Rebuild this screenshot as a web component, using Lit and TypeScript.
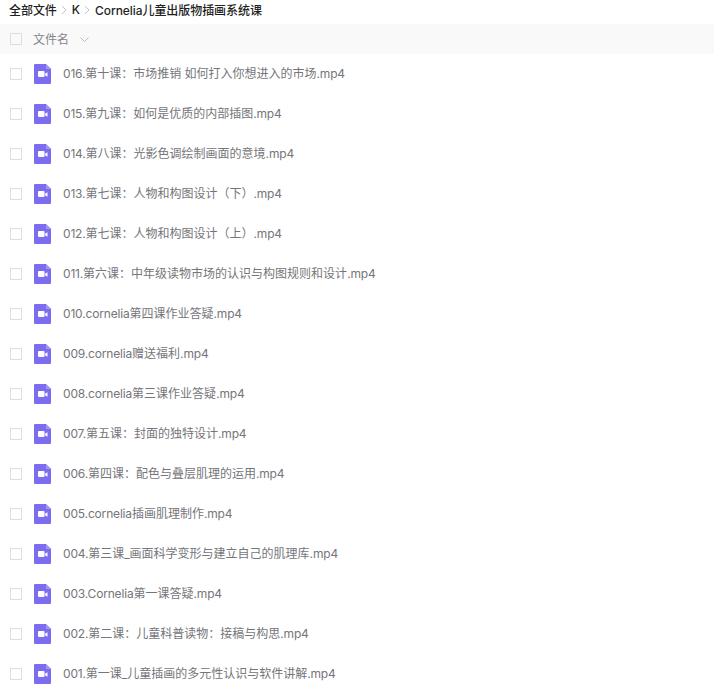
import { LitElement, html, css } from "lit";
import { customElement } from "lit/decorators.js";

const FILES = [
  "016.第十课：市场推销 如何打入你想进入的市场.mp4",
  "015.第九课：如何是优质的内部插图.mp4",
  "014.第八课：光影色调绘制画面的意境.mp4",
  "013.第七课：人物和构图设计（下）.mp4",
  "012.第七课：人物和构图设计（上）.mp4",
  "011.第六课：中年级读物市场的认识与构图规则和设计.mp4",
  "010.cornelia第四课作业答疑.mp4",
  "009.cornelia赠送福利.mp4",
  "008.cornelia第三课作业答疑.mp4",
  "007.第五课：封面的独特设计.mp4",
  "006.第四课：配色与叠层肌理的运用.mp4",
  "005.cornelia插画肌理制作.mp4",
  "004.第三课_画面科学变形与建立自己的肌理库.mp4",
  "003.Cornelia第一课答疑.mp4",
  "002.第二课：儿童科普读物：接稿与构思.mp4",
  "001.第一课_儿童插画的多元性认识与软件讲解.mp4",
];

const runs = (s: string) =>
  s.split(/([\x00-\x7f]+)/).filter(Boolean).map((r) =>
    /^[\x00-\x7f]/.test(r) ? html`<span class="latin">${r}</span>` : r
  );

@customElement("app-root")
export class AppRoot extends LitElement {
  static styles = css`
    :host {
      display: block;
      width: 714px;
      height: 696px;
      overflow: hidden;
      background: #fff;
      font-family: Inter, "Noto Sans CJK SC", sans-serif;
    }
    .crumbs {
      height: 19px;
      padding: 0 0 5px 9px;
      display: flex;
      align-items: center;
      gap: 4px;
      font-size: 12px;
      font-weight: 500;
      color: #1f1f24;
      letter-spacing: -0.06px;
    }
    .sep { width: 6px; height: 10px; margin: 0 0.5px; flex: none; }
    .head {
      height: 30px;
      display: flex;
      align-items: center;
      background: #f9f9f9;
      color: #85858a;
      font-size: 12px;
    }
    .box {
      width: 10px;
      height: 10px;
      border: 1px solid #dedede;
      background: #fff;
      margin-left: 10px;
      flex: none;
    }
    .head .box { background: #f9f9f9; }
    .head .label { margin-left: 11px; padding-bottom: 2px; }
    .chev { width: 9px; height: 5px; margin-left: 11px; }
    .row {
      height: 40px;
      display: flex;
      align-items: center;
      color: #75757a;
      font-size: 12px;
      white-space: pre;
    }
    .latin { letter-spacing: -0.17px; }
    .icon { width: 17px; height: 20px; margin-left: 12px; margin-right: 12px; flex: none; }
    .name { padding-bottom: 3px; }
  `;

  render() {
    return html`
      <div class="crumbs">
        <span>全部文件</span>
        <svg class="sep" viewBox="0 0 6 10"><path d="M1 1l4 4-4 4" fill="none" stroke="#c4c4c7" stroke-width="1"/></svg>
        <span>K</span>
        <svg class="sep" viewBox="0 0 6 10"><path d="M1 1l4 4-4 4" fill="none" stroke="#c4c4c7" stroke-width="1"/></svg>
        <span>Cornelia儿童出版物插画系统课</span>
      </div>
      <div class="head">
        <span class="box"></span>
        <span class="label">文件名</span>
        <svg class="chev" viewBox="0 0 9 5"><path d="M.5.5l4 4 4-4" fill="none" stroke="#bdbdc0" stroke-width="1"/></svg>
      </div>
      <div class="list">
        ${FILES.map(
          (f) => html`<div class="row">
            <span class="box"></span>
            <svg class="icon" viewBox="0 0 17 20">
              <path d="M1 0h11l5 5v14a1 1 0 0 1-1 1H1a1 1 0 0 1-1-1V1a1 1 0 0 1 1-1z" fill="#7c6cf0"/>
              <path d="M12 0l5 5h-4a1 1 0 0 1-1-1z" fill="#a597f5"/>
              <rect x="4" y="7" width="6.500" height="6" rx="1" fill="#fff"/>
              <path d="M11 9.800l2.500-1.500v4.400l-2.500-1.500z" fill="#fff"/>
            </svg>
            <span class="name">${runs(f)}</span>
          </div>`
        )}
      </div>
    `;
  }
}
